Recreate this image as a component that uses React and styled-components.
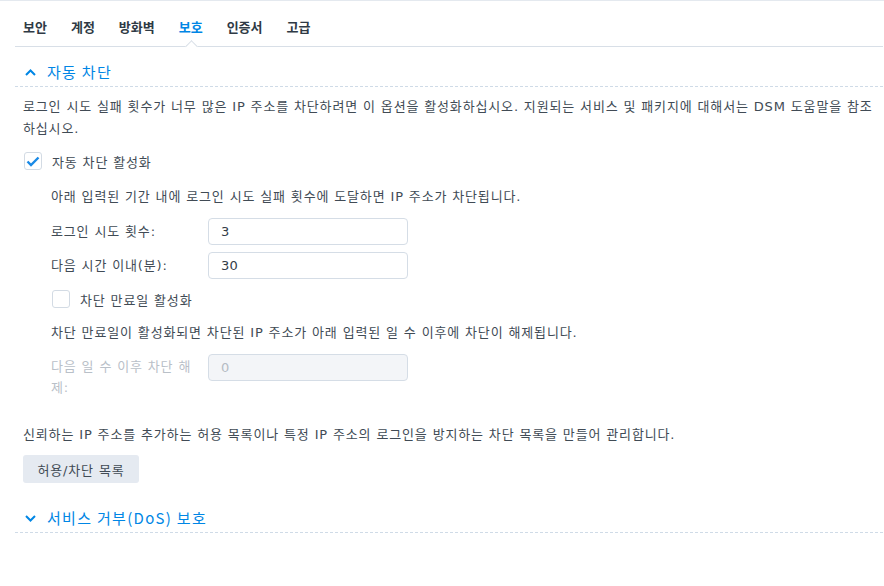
import React from "react";
import styled, { createGlobalStyle, css } from "styled-components";

const FONT = `"DejaVu Sans", "Noto Sans CJK KR", sans-serif`;

const Global = createGlobalStyle`
  html, body { margin: 0; padding: 0; background: #fff; }
  body {
    font-family: ${FONT};
    font-size: 13px;
    letter-spacing: 0.85px;
    color: #414b55;
  }
  * { box-sizing: border-box; }
`;

const Page = styled.div`
  border-top: 1px solid #e4e9ef;
  padding: 0 1px 0 15px;
  width: 884px;
`;

const TabBar = styled.div`
  display: flex;
  height: 46px;
  padding: 0 0 0 8px;
  gap: 24px;
  border-bottom: 1px solid #d8dfe7;
`;

const Tab = styled.div`
  position: relative;
  display: flex;
  align-items: center;
  padding-top: 6px;
  font-weight: 600;
  font-size: 13px;
  letter-spacing: 0;
  color: ${(p) => (p.$active ? "#0086e5" : "#2f3a45")};
  ${(p) =>
    p.$active &&
    css`
      &::after {
        content: "";
        position: absolute;
        left: 50%;
        bottom: -5px;
        width: 8px;
        height: 8px;
        margin-left: -4px;
        background: #fff;
        border-left: 1px solid #d8dfe7;
        border-top: 1px solid #d8dfe7;
        transform: rotate(45deg);
      }
    `}
`;

const SectionHeader = styled.div`
  display: flex;
  align-items: center;
  gap: 11px;
  padding: 15px 0 4px 10px;
  margin-top: ${(p) => p.$mt || 0}px;
  border-bottom: 1px dashed #cfdbe7;
  color: #0086e5;
  font-family: "Noto Sans CJK KR", sans-serif;
  font-size: 15px;
  letter-spacing: 1.3px;
  line-height: 20px;
`;

const Body = styled.div`
  padding: 9px 8px 0 8px;
`;

const Para = styled.p`
  margin: ${(p) => p.$mt || 0}px 0 0 ${(p) => p.$indent || 0}px;
  line-height: 22px;
  color: #414b55;
`;

const CheckRow = styled.label`
  display: flex;
  align-items: center;
  gap: 10px;
  height: 22px;
  margin: ${(p) => p.$mt || 0}px 0 0 ${(p) => p.$indent || 0}px;
  color: #414b55;
`;

const Box = styled.span`
  width: 18px;
  height: 18px;
  border: 1px solid #d3dbe4;
  border-radius: 3px;
  background: #fff;
  display: flex;
  align-items: center;
  justify-content: center;
`;

const FormRow = styled.div`
  display: flex;
  align-items: ${(p) => (p.$top ? "flex-start" : "center")};
  margin: ${(p) => p.$mt || 0}px 0 0 28px;
`;

const FieldLabel = styled.div`
  width: 145px;
  margin-right: 12px;
  line-height: 21px;
  padding-top: ${(p) => (p.$top ? 2 : 0)}px;
  color: ${(p) => (p.$disabled ? "#b9c0c8" : "#414b55")};
`;

const Input = styled.div`
  width: 200px;
  height: 27px;
  border: 1px solid #d5dde6;
  border-radius: 4px;
  padding-left: 12px;
  display: flex;
  align-items: center;
  font-size: 13px;
  letter-spacing: 0.3px;
  background: ${(p) => (p.$disabled ? "#f3f5f8" : "#fff")};
  color: ${(p) => (p.$disabled ? "#b5bcc4" : "#333c47")};
`;

const Button = styled.button`
  margin-top: 9px;
  height: 28px;
  width: 116px;
  border: none;
  border-radius: 3px;
  background: #e5eaf1;
  color: #414b55;
  font-family: ${FONT};
  font-size: 13px;
  letter-spacing: inherit;
  padding: 0;
`;

const Chevron = ({ up }) => (
  <svg width="11" height="7" viewBox="0 0 11 7" fill="none">
    <path
      d={up ? "M1 6L5.5 1.5L10 6" : "M1 1L5.5 5.5L10 1"}
      stroke="#0086e5"
      strokeWidth="2"
    />
  </svg>
);

const Check = () => (
  <svg width="14" height="11" viewBox="0 0 14 11" fill="none">
    <path d="M1.5 5.5L5 9L12.5 1.5" stroke="#1a8ae6" strokeWidth="2.4" />
  </svg>
);

const tabs = ["보안", "계정", "방화벽", "보호", "인증서", "고급"];

export default function App() {
  return (
    <>
      <Global />
      <Page>
        <TabBar>
          {tabs.map((t) => (
            <Tab key={t} $active={t === "보호"}>
              {t}
            </Tab>
          ))}
        </TabBar>

        <SectionHeader>
          <Chevron up />
          자동 차단
        </SectionHeader>

        <Body>
          <Para>
            로그인 시도 실패 횟수가 너무 많은 IP 주소를 차단하려면 이 옵션을 활성화하십시오. 지원되는 서비스 및 패키지에 대해서는 DSM 도움말을 참조하십시오.
          </Para>
          <CheckRow $mt={10} $indent={1}>
            <Box>
              <Check />
            </Box>
            자동 차단 활성화
          </CheckRow>
          <Para $mt={14} $indent={28}>
            아래 입력된 기간 내에 로그인 시도 실패 횟수에 도달하면 IP 주소가 차단됩니다.
          </Para>
          <FormRow $mt={10}>
            <FieldLabel>로그인 시도 횟수:</FieldLabel>
            <Input>3</Input>
          </FormRow>
          <FormRow $mt={7}>
            <FieldLabel>다음 시간 이내(분):</FieldLabel>
            <Input>30</Input>
          </FormRow>
          <CheckRow $mt={9} $indent={29}>
            <Box />
            차단 만료일 활성화
          </CheckRow>
          <Para $mt={12} $indent={28}>
            차단 만료일이 활성화되면 차단된 IP 주소가 아래 입력된 일 수 이후에 차단이 해제됩니다.
          </Para>
          <FormRow $mt={10} $top>
            <FieldLabel $top $disabled>
              다음 일 수 이후 차단 해제:
            </FieldLabel>
            <Input $disabled>0</Input>
          </FormRow>
          <Para $mt={26}>
            신뢰하는 IP 주소를 추가하는 허용 목록이나 특정 IP 주소의 로그인을 방지하는 차단 목록을 만들어 관리합니다.
          </Para>
          <Button>허용/차단 목록</Button>
        </Body>

        <SectionHeader $mt={10}>
          <Chevron />
          서비스 거부(DoS) 보호
        </SectionHeader>
      </Page>
    </>
  );
}
